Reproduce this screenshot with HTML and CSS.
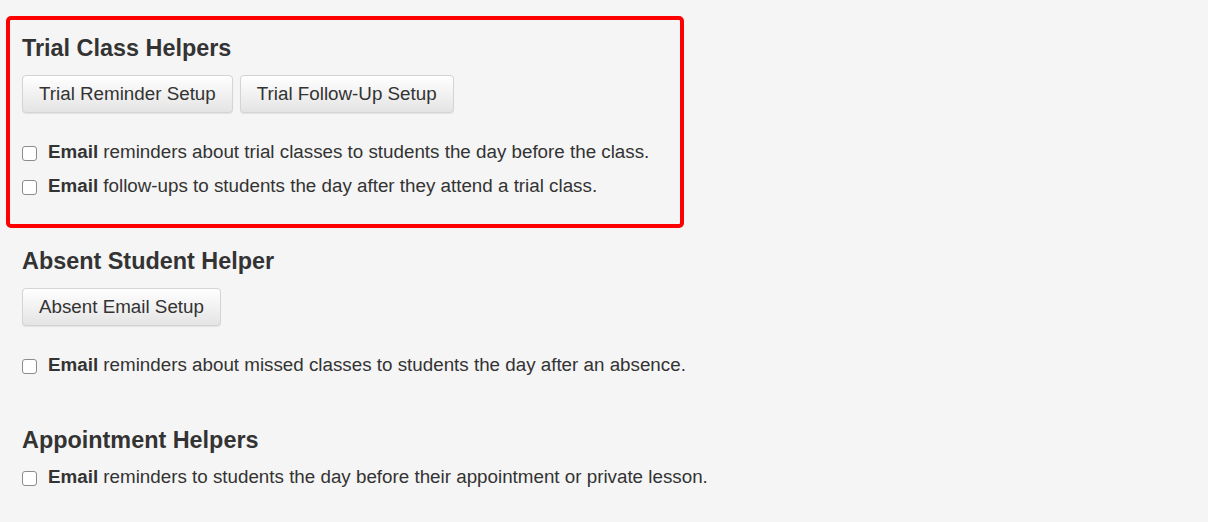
FILE: index.html
```html
<!DOCTYPE html>
<html lang="en">
<head>
    <meta charset="UTF-8">
    <meta name="viewport" content="width=device-width, initial-scale=1.0">
    <title>Email Helpers</title>
    <link rel="stylesheet" href="styles.css">
</head>
<body>
    <div class="page">
        <!-- Trial classes -->
        <div class="helper helper-highlight">
            <h4 class="helper-title">Trial Class Helpers</h4>
            <div class="helper-actions">
                <button class="btn">Trial Reminder Setup</button>
                <button class="btn">Trial Follow-Up Setup</button>
            </div>
            <div class="helper-options">
                <label class="option"><input type="checkbox"><span><b>Email</b> reminders about trial classes to students the day before the class.</span></label>
                <label class="option"><input type="checkbox"><span><b>Email</b> follow-ups to students the day after they attend a trial class.</span></label>
            </div>
        </div>

        <!-- Absences -->
        <div class="helper">
            <h4 class="helper-title">Absent Student Helper</h4>
            <div class="helper-actions">
                <button class="btn">Absent Email Setup</button>
            </div>
            <div class="helper-options">
                <label class="option"><input type="checkbox"><span><b>Email</b> reminders about missed classes to students the day after an absence.</span></label>
            </div>
        </div>

        <!-- Appointments -->
        <div class="helper">
            <h4 class="helper-title">Appointment Helpers</h4>
            <div class="helper-options">
                <label class="option"><input type="checkbox"><span><b>Email</b> reminders to students the day before their appointment or private lesson.</span></label>
            </div>
        </div>
    </div>
</body>
</html>
```

FILE: styles.css
```css
* {
    box-sizing: border-box;
    margin: 0;
    padding: 0;
}

body {
    font-family: 'Liberation Sans', Arial, sans-serif;
    font-size: 18.8px;
    color: #333;
    background-color: #f5f5f5;
}

.page {
    padding: 16px 0 0 6px;
}

.helper {
    padding: 15px 12px 21px;
    border: 4px solid transparent;
    border-radius: 5px;
    margin-bottom: 1px;
}

.helper-highlight {
    width: 678px;
    border-color: #ff0000;
}

.helper-title {
    font-size: 23.4px;
    line-height: 26px;
    font-weight: bold;
}

.helper-title + .helper-options {
    margin-top: 7px;
}

.helper-actions {
    display: flex;
    gap: 7px;
    margin-top: 14px;
    margin-bottom: 22px;
}

.btn {
    font-family: inherit;
    font-size: 18.8px;
    line-height: 27px;
    color: #333;
    padding: 4px 16px 5px;
    height: 38px;
    border: 1px solid #d4d4d4;
    border-radius: 4px;
    background-image: linear-gradient(to bottom, #ffffff 0%, #e4e4e4 100%);
    box-shadow: inset 0 1px 0 rgba(255,255,255,0.15), 0 1px 1px rgba(0,0,0,0.075);
    cursor: pointer;
}

.option {
    display: flex;
    align-items: center;
    height: 34px;
    line-height: 34px;
    white-space: nowrap;
}

.option input {
    -webkit-appearance: none;
    appearance: none;
    display: block;
    width: 15px;
    height: 15px;
    margin: 3px 11px 0 0;
    border: 1px solid #8c8c8c;
    border-radius: 3px;
    background: #fff;
    flex-shrink: 0;
}

.option b {
    font-weight: bold;
}
```
